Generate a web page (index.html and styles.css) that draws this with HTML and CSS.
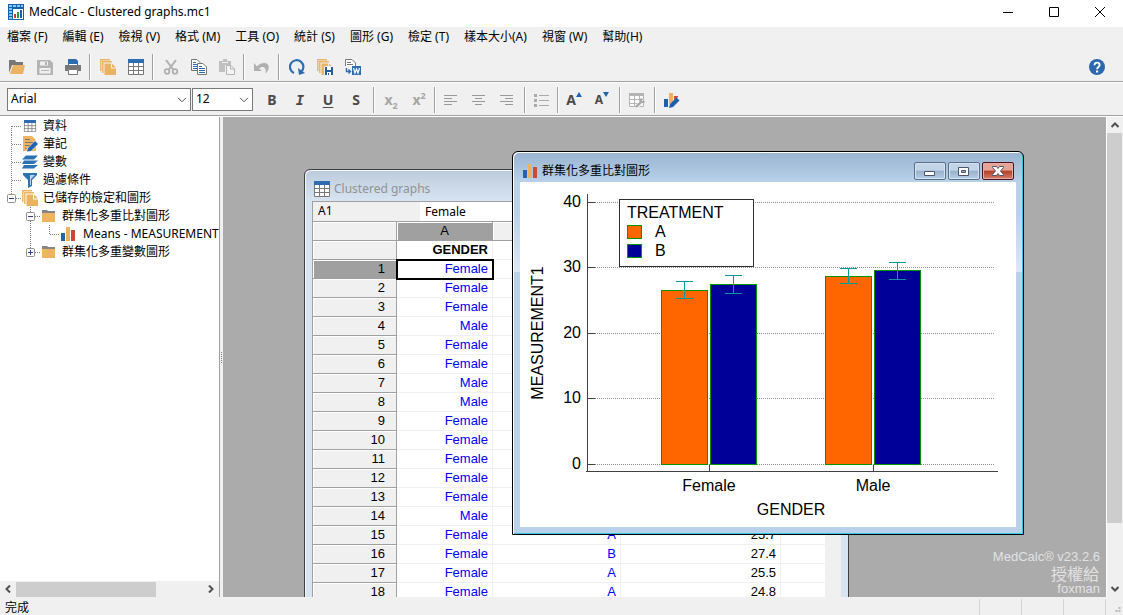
FILE: index.html
```html
<!DOCTYPE html>
<html lang="zh-Hant">

<head>
    <meta charset="UTF-8">
    <meta name="viewport" content="width=device-width, initial-scale=1.0">
    <title>MedCalc - Clustered graphs.mc1</title>
    <link rel="stylesheet" href="styles.css">
</head>

<body>
    <!-- shared icons -->
    <svg class="defs" width="0" height="0">
        <symbol id="i-table" viewBox="0 0 16 16">
            <path fill="#fff" d="M0 0h16v16H0z" />
            <path fill="#2d6cb0" d="M0 0h16v4H0z" />
            <path fill="none" stroke="#777" d="M.5 4v11.500h15V4M0 7.500h16M0 11.500h16M5.500 4v12M10.500 4v12" />
        </symbol>
        <symbol id="i-stack" viewBox="0 0 16 16">
            <path fill="none" stroke="#eab262" stroke-width="1.4" d="M.8 12V.8H10M2.8 14V2.8H12" />
            <path fill="#eab262" d="M4.500 4.500h6.500v5h5V16H4.500z" />
            <path fill="#eab262" d="M12 4.500l4 4h-4z" />
        </symbol>
        <symbol id="i-chart" viewBox="0 0 16 16">
            <path fill="#2463ae" d="M1 7h4v8H1z" />
            <path fill="#eab262" d="M6 1h4v14H6z" />
            <path fill="#cc4a31" d="M11 4h4v11h-4z" />
        </symbol>
        <symbol id="i-folder" viewBox="0 0 16 16">
            <path fill="#858585" d="M1 2h5l1 1h7v3H1z" />
            <path fill="#f0b45e" d="M1 5h13v9H1z" />
        </symbol>
    </svg>

    <header class="titlebar">
        <svg class="app-icon" viewBox="0 0 16 16">
            <path fill="#1264b0" d="M0 0h16v16H0z" />
            <path fill="#8cc4f0" d="M1 1h3v2H1zM5 1h3v2H5zM9 1h3v2H9zM13 1h2v2h-2zM1 4h3v2H1zM1 7h3v2H1zM1 10h3v2H1zM1 13h3v2H1z" />
            <path fill="#fff" d="M5 5h10v10H5z" />
            <path fill="#d33" d="M6 10h2v4H6z" />
            <path fill="#2a9c3a" d="M9 8h2v6H9z" />
            <path fill="#1264b0" d="M12 6h2v8h-2z" />
        </svg>
        <h1>MedCalc - Clustered graphs.mc1</h1>
        <div class="caption">
            <button aria-label="Minimize"><svg viewBox="0 0 12 12"><path d="M1 6.500h10" /></svg></button>
            <button aria-label="Maximize"><svg viewBox="0 0 12 12"><path d="M1.500 1.500h9v9h-9z" /></svg></button>
            <button aria-label="Close"><svg viewBox="0 0 12 12"><path d="M1 1l10 10M11 1L1 11" /></svg></button>
        </div>
    </header>

    <nav class="menubar">
        <button>檔案 (F)</button>
        <button>編輯 (E)</button>
        <button>檢視 (V)</button>
        <button>格式 (M)</button>
        <button>工具 (O)</button>
        <button>統計 (S)</button>
        <button>圖形 (G)</button>
        <button>檢定 (T)</button>
        <button>樣本大小(A)</button>
        <button>視窗 (W)</button>
        <button>幫助(H)</button>
    </nav>

    <div class="toolbar main-tools">
        <button aria-label="Open"><svg viewBox="0 0 16 16">
                <path fill="#777" d="M0 1h6l1 2h7v3H3L0 14z" />
                <path fill="#eab262" d="M4 6h12l-2 9H1z" />
            </svg></button>
        <button aria-label="Save"><svg viewBox="0 0 16 16">
                <path fill="#b4b4b4" fill-rule="evenodd" d="M0 1h13l3 3v12H0zM3 2.500h8v4H3zM2.500 9h11v5.500h-11z" />
                <path fill="#b4b4b4" d="M8 3h2v3H8zM4 11h8v1H4z" />
            </svg></button>
        <button aria-label="Print"><svg viewBox="0 0 16 16">
                <path fill="#777" d="M0 6h16v6h-3v-2H3v2H0z" />
                <path fill="#2d6cb0" d="M3 0h8l2 2v4H3z" />
                <path fill="#fff" d="M4 5h8v1H4zM4 11h8v4H4z" />
                <path fill="none" stroke="#777" d="M3.500 10.500h9v5h-9z" />
            </svg></button>
        <span class="sep"></span>
        <button aria-label="Contents"><svg><use href="#i-stack" /></svg></button>
        <button aria-label="Data"><svg><use href="#i-table" /></svg></button>
        <span class="sep"></span>
        <button aria-label="Cut"><svg viewBox="0 0 16 16">
                <path fill="none" stroke="#b0b0b0" stroke-width="2" d="M3 1l7.500 10M13 1L5.500 11" />
                <circle cx="4" cy="12.500" r="2.300" fill="none" stroke="#b0b0b0" stroke-width="1.800" />
                <circle cx="12" cy="12.500" r="2.300" fill="none" stroke="#b0b0b0" stroke-width="1.800" />
            </svg></button>
        <button aria-label="Copy"><svg viewBox="0 0 16 16">
                <path fill="#fff" stroke="#777" d="M.5.5H6l3 3v8H.5z" />
                <path stroke="#2d6cb0" d="M2 3.500h3M2 5.500h4M2 7.500h4M2 9.500h4" />
                <path fill="#fff" stroke="#777" d="M6.500 4.500H12l3.500 3.500v7.500h-9z" />
                <path stroke="#2d6cb0" d="M8 7.500h3M8 9.500h6M8 11.500h6M8 13.500h6" />
            </svg></button>
        <button aria-label="Paste"><svg viewBox="0 0 16 16">
                <path fill="#c0c0c0" d="M0 2h4V0h4v2h4v4H6v7H0z" />
                <path fill="#f0f0f0" d="M3 3h6v1H3z" />
                <path fill="#f4f4f4" stroke="#b4b4b4" d="M7.500 6.500H12l3.500 3.500v5.500h-8zM11.500 6.500V10h4" />
            </svg></button>
        <span class="sep"></span>
        <button aria-label="Undo"><svg viewBox="0 0 16 16">
                <path fill="#b0b0b0" d="M0 4v8h8L5 9.500c3-3 8-2 6.500 5C16 11 16 4 10.500 4 7.500 4 5 5 3 7.500z" />
            </svg></button>
        <span class="sep"></span>
        <button aria-label="Recalculate"><svg viewBox="0 0 16 16">
                <path fill="none" stroke="#2d6cb0" stroke-width="2.200" d="M5 14A6.700 6.700 0 1 1 12 13" />
                <path fill="#2d6cb0" d="M9 9l1 7 6-2z" />
            </svg></button>
        <button aria-label="Save all"><svg viewBox="0 0 16 16">
                <use href="#i-stack" />
                <path fill="#245d9c" stroke="#f0f0f0" d="M7.500 7.500h9v9h-9z" />
                <path fill="#fff" d="M10 8h4v3h-4zM10 13h4v3h-4z" />
                <path fill="#245d9c" d="M11 14h1v2h-1z" />
            </svg></button>
        <button aria-label="Save to Word"><svg viewBox="0 0 16 16">
                <path fill="#fff" stroke="#777" d="M.5 7V.5H7L10.500 4v3" />
                <path stroke="#777" d="M2 3.500h4M2 5.500h6" />
                <path fill="none" stroke="#2d6cb0" stroke-width="1.400" d="M1.500 9v3.500H5M3.500 10.500l2 2-2 2" />
                <path fill="#2d6cb0" d="M7 7h9v9H7z" />
                <path fill="none" stroke="#fff" stroke-width="1.200" d="M8.500 9l1.500 5 1.500-4 1.500 4 1.500-5" />
            </svg></button>
        <button class="help" aria-label="Help"><svg viewBox="0 0 16 16">
                <circle cx="8" cy="8" r="8" fill="#2b68b0" />
                <path fill="none" stroke="#fff" stroke-width="1.900" d="M5.500 6.200C5.500 2.700 10.600 3 10.600 6c0 2-2.500 1.800-2.500 4.200" />
                <path fill="#fff" d="M7 11.500h2.200v2H7z" />
            </svg></button>
    </div>

    <div class="toolbar format-tools">
        <div class="combo font-name">
            <select aria-label="Font">
                <option>Arial</option>
            </select>
            <svg viewBox="0 0 10 6"><path d="M1 .8l4 4 4-4" /></svg>
        </div>
        <div class="combo font-size">
            <select aria-label="Font size">
                <option>12</option>
            </select>
            <svg viewBox="0 0 10 6"><path d="M1 .8l4 4 4-4" /></svg>
        </div>
        <div class="format-buttons">
            <button><b>B</b></button>
            <button><i>I</i></button>
            <button><u>U</u></button>
            <button><b>S</b></button>
            <span class="sep"></span>
            <button class="off"><b>x<sub>2</sub></b></button>
            <button class="off"><b>x<sup>2</sup></b></button>
            <span class="sep tight"></span>
            <button aria-label="Align left"><svg viewBox="0 0 16 16"><path stroke="#999" d="M1 3.500h13M1 6.500h8M1 9.500h13M1 12.500h8" /></svg></button>
            <button aria-label="Center"><svg viewBox="0 0 16 16"><path stroke="#999" d="M1 3.500h13M4 6.500h7M1 9.500h13M4 12.500h7" /></svg></button>
            <button aria-label="Align right"><svg viewBox="0 0 16 16"><path stroke="#999" d="M1 3.500h13M6 6.500h8M1 9.500h13M6 12.500h8" /></svg></button>
            <span class="sep"></span>
            <button aria-label="List"><svg viewBox="0 0 16 16">
                    <path stroke="#aaa" d="M5 3.500h10M5 8.500h10M5 13.500h10" />
                    <path fill="#aaa" d="M0 2h3v3H0zM0 7h3v3H0zM0 12h3v3H0z" />
                </svg></button>
            <span class="sep tight"></span>
            <button class="grow" aria-label="Larger font"><b>A</b><svg viewBox="0 0 6 5"><path fill="#1f65ad" d="M0 5l3-5 3 5z" /></svg></button>
            <button class="shrink" aria-label="Smaller font"><b>A</b><svg viewBox="0 0 6 5"><path fill="#1f65ad" d="M0 0h6L3 5z" /></svg></button>
            <span class="sep"></span>
            <button aria-label="Format table"><svg viewBox="0 0 16 16">
                    <path fill="#b4b4b4" d="M0 1h15v3H0z" />
                    <path fill="#fafafa" stroke="#b4b4b4" d="M.5 4v10.500h14V4M0 7.500h15M0 11.500h15M5.500 4v10M10.500 4v10" />
                    <path stroke="#f0f0f0" stroke-width="4" d="M7 15l6-5" />
                    <path stroke="#a8a8a8" stroke-width="2.400" d="M7 15l6-6" />
                    <path fill="none" stroke="#a8a8a8" stroke-width="2" d="M12 6.500v3.500h3.500" />
                </svg></button>
            <span class="sep"></span>
            <button aria-label="Format graph"><svg viewBox="0 0 16 16">
                    <path fill="#1f5fa8" d="M0 7h4v8H0z" />
                    <path fill="#eab262" d="M5 1h4v12H5z" />
                    <path fill="#cc4a31" d="M10 4h4v6h-4z" />
                    <path stroke="#f0f0f0" stroke-width="5" d="M6 15l9-8" />
                    <path fill="#1f5fa8" d="M5 16l1-4 6.500-6.500 3 3L9 15z" />
                </svg></button>
        </div>
    </div>

    <main>
        <aside class="sidebar">
            <div class="tree">
                <div class="row">
                    <svg class="guide" viewBox="0 0 19 18"><path d="M9.500 9v9M10 9.500h9" /></svg>
                    <svg class="icon"><use href="#i-table" x="1" y="2" width="14" height="12" /></svg>
                    <span>資料</span>
                </div>
                <div class="row">
                    <svg class="guide" viewBox="0 0 19 18"><path d="M9.500 0v18M10 9.500h9" /></svg>
                    <svg class="icon" viewBox="0 0 16 16">
                        <path fill="#f0b45e" d="M1 0h9l4 4v11H1z" />
                        <path stroke="#777" d="M3 3.500h5M3 6.500h8M3 9.500h5M3 12.500h3" />
                        <path stroke="#fff" stroke-width="5" d="M6 15l9-9" />
                        <path fill="#2463ae" d="M5 15.500l1-3.500 7-7 3 3-7 7z" />
                    </svg>
                    <span>筆記</span>
                </div>
                <div class="row">
                    <svg class="guide" viewBox="0 0 19 18"><path d="M9.500 0v18M10 9.500h9" /></svg>
                    <svg class="icon" viewBox="0 0 16 16">
                        <path fill="#2d72b2" d="M4 1.500h12l-4 4H0zM2 6.500h14l-4 3.500H0zM2 11h14l-4 3.500H0z" />
                    </svg>
                    <span>變數</span>
                </div>
                <div class="row">
                    <svg class="guide" viewBox="0 0 19 18"><path d="M9.500 0v18M10 9.500h9" /></svg>
                    <svg class="icon" viewBox="0 0 16 16">
                        <path fill="#2d72b2" d="M1 1h14v2l-5 5v6l-4 2V8L1 3z" />
                        <path fill="#bcd5ec" d="M8 3h5L9 7v6H8z" />
                    </svg>
                    <span>過濾條件</span>
                </div>
                <div class="row">
                    <svg class="guide" viewBox="0 0 19 18">
                        <path d="M9.500 0v5M14 9.500h5" />
                        <rect x="5.500" y="5.500" width="8" height="8" rx="1" />
                        <path class="sign" d="M7 9.500h5" />
                    </svg>
                    <svg class="icon"><use href="#i-stack" /></svg>
                    <span>已儲存的檢定和圖形</span>
                </div>
                <div class="row">
                    <span class="indent"></span>
                    <svg class="guide" viewBox="0 0 19 18">
                        <path d="M9.500 0v18M14 9.500h5" />
                        <rect x="5.500" y="5.500" width="8" height="8" rx="1" />
                        <path class="sign" d="M7 9.500h5" />
                    </svg>
                    <svg class="icon"><use href="#i-folder" /></svg>
                    <span>群集化多重比對圖形</span>
                </div>
                <div class="row">
                    <span class="indent"></span>
                    <svg class="guide" viewBox="0 0 19 18"><path d="M9.500 0v18" /></svg>
                    <svg class="guide" viewBox="0 0 19 18"><path d="M9.500 0v9M10 9.500h9" /></svg>
                    <svg class="icon"><use href="#i-chart" /></svg>
                    <span class="leaf">Means - MEASUREMENT1</span>
                </div>
                <div class="row">
                    <span class="indent"></span>
                    <svg class="guide" viewBox="0 0 19 18">
                        <path d="M9.500 0v5M14 9.500h5" />
                        <rect x="5.500" y="5.500" width="8" height="8" rx="1" />
                        <path class="sign" d="M7 9.500h5M9.500 7v5" />
                    </svg>
                    <svg class="icon"><use href="#i-folder" /></svg>
                    <span>群集化多重變數圖形</span>
                </div>
            </div>
            <div class="hscroll">
                <svg viewBox="0 0 8 8"><path d="M6 .5L2.500 4 6 7.500" /></svg>
                <div class="track"><div class="thumb"></div></div>
                <svg viewBox="0 0 8 8"><path d="M2 .5L5.500 4 2 7.500" /></svg>
            </div>
        </aside>
        <div class="splitter"><span></span></div>

        <section class="workspace">
            <div class="watermark">
                <p>MedCalc® v23.2.6</p>
                <p class="licence">授權給</p>
                <p>foxman</p>
            </div>

            <div class="window data-window">
                <div class="window-title">
                    <svg class="icon"><use href="#i-table" /></svg>
                    <h2>Clustered graphs</h2>
                </div>
                <div class="sheet">
                    <div class="formula">
                        <label for="cell-value">A1</label>
                        <input id="cell-value" type="text" value="Female">
                    </div>
                    <div class="grid">
                        <table>
                            <colgroup>
                                <col class="c-row">
                                <col class="c-a">
                                <col class="c-b">
                                <col class="c-c">
                                <col class="c-d">
                            </colgroup>
                            <thead>
                                <tr><th></th><th class="active">A</th><th></th><th></th><th></th></tr>
                            </thead>
                            <tbody>
                                <tr class="names"><th></th><td>GENDER</td><td></td><td></td><td></td></tr>
                                <tr><th class="active">1</th><td class="selected">Female</td><td></td><td></td><td></td></tr>
                                <tr><th>2</th><td>Female</td><td></td><td></td><td></td></tr>
                                <tr><th>3</th><td>Female</td><td></td><td></td><td></td></tr>
                                <tr><th>4</th><td>Male</td><td></td><td></td><td></td></tr>
                                <tr><th>5</th><td>Female</td><td></td><td></td><td></td></tr>
                                <tr><th>6</th><td>Female</td><td></td><td></td><td></td></tr>
                                <tr><th>7</th><td>Male</td><td></td><td></td><td></td></tr>
                                <tr><th>8</th><td>Male</td><td></td><td></td><td></td></tr>
                                <tr><th>9</th><td>Female</td><td></td><td></td><td></td></tr>
                                <tr><th>10</th><td>Female</td><td></td><td></td><td></td></tr>
                                <tr><th>11</th><td>Female</td><td></td><td></td><td></td></tr>
                                <tr><th>12</th><td>Female</td><td></td><td></td><td></td></tr>
                                <tr><th>13</th><td>Female</td><td></td><td></td><td></td></tr>
                                <tr><th>14</th><td>Male</td><td></td><td></td><td></td></tr>
                                <tr><th>15</th><td>Female</td><td>A</td><td class="num">25.7</td><td></td></tr>
                                <tr><th>16</th><td>Female</td><td>B</td><td class="num">27.4</td><td></td></tr>
                                <tr><th>17</th><td>Female</td><td>A</td><td class="num">25.5</td><td></td></tr>
                                <tr><th>18</th><td>Female</td><td>A</td><td class="num">24.8</td><td></td></tr>
                            </tbody>
                        </table>
                    </div>
                </div>
            </div>

            <div class="window chart-window">
                <div class="window-title">
                    <svg class="icon"><use href="#i-chart" /></svg>
                    <h2>群集化多重比對圖形</h2>
                    <div class="window-buttons">
                        <button aria-label="Minimize"><svg viewBox="0 0 14 12"><path d="M1.500 6.500h10v4h-10z" /></svg></button>
                        <button aria-label="Maximize"><svg viewBox="0 0 14 12"><path fill-rule="evenodd" d="M1.500 2.500h10v8h-10zM4.500 5.500h4v2h-4z" /></svg></button>
                        <button class="close" aria-label="Close"><svg viewBox="0 0 14 12"><path d="M1.500 1.500h4L7 3.500l1.500-2h4v1L9.500 6l3 3.500v1h-4L7 8.500l-1.500 2h-4v-1l3-3.500-3-3.500z" /></svg></button>
                    </div>
                </div>
                <svg class="chart" viewBox="0 0 496 345">
                    <g class="gridlines">
                        <path d="M75 20.500h400M75 85.500h400M75 151.500h400M75 216.500h400M75 282.500h400" />
                    </g>
                    <g class="axes">
                        <path d="M67.500 12v278M66 289.500h412" />
                        <path d="M68 20.500h7M68 85.500h7M68 151.500h7M68 216.500h7M68 282.500h7M189.500 283v6M353.500 283v6" />
                    </g>
                    <g class="bars">
                        <rect class="a" x="141.500" y="108.500" width="46" height="174" />
                        <rect class="b" x="190.500" y="102.500" width="46" height="180" />
                        <rect class="a" x="305.500" y="94.500" width="46" height="188" />
                        <rect class="b" x="354.500" y="88.500" width="46" height="194" />
                    </g>
                    <g class="errors">
                        <path d="M156 99.500h17M164.500 99v18M156 116.500h17" />
                        <path d="M205 93.500h17M213.500 93v19M205 111.500h17" />
                        <path d="M320 86.500h17M328.500 86v16M320 101.500h17" />
                        <path d="M369 80.500h17M377.500 80v18M369 97.500h17" />
                    </g>
                    <g class="y-labels">
                        <text x="61" y="25">40</text>
                        <text x="61" y="90">30</text>
                        <text x="61" y="156">20</text>
                        <text x="61" y="221">10</text>
                        <text x="61" y="287">0</text>
                    </g>
                    <g class="x-labels">
                        <text x="189" y="309">Female</text>
                        <text x="353" y="309">Male</text>
                        <text x="271" y="333">GENDER</text>
                        <text transform="translate(23 151) rotate(-90)">MEASUREMENT1</text>
                    </g>
                    <!-- legend -->
                    <rect class="legend" x="99.500" y="17.500" width="134" height="67" />
                    <text x="107" y="36">TREATMENT</text>
                    <g class="bars">
                        <rect class="a" x="107.500" y="43.500" width="14" height="13" />
                        <rect class="b" x="107.500" y="62.500" width="14" height="13" />
                    </g>
                    <text x="135" y="55">A</text>
                    <text x="135" y="74">B</text>
                </svg>
            </div>
        </section>

        <div class="vscroll">
            <svg viewBox="0 0 8 8"><path d="M.5 6L4 2.500 7.500 6" /></svg>
            <div class="track"><div class="thumb"></div></div>
            <svg viewBox="0 0 8 8"><path d="M.5 2L4 5.500 7.500 2" /></svg>
        </div>
    </main>

    <footer class="statusbar">
        <span class="message">完成</span>
        <span class="pane"></span>
        <span class="pane"></span>
        <span class="pane"></span>
        <svg class="grip" viewBox="0 0 16 16"><path fill="#b8b8b8" d="M12 8h2v2h-2zM9 11h2v2H9zM12 11h2v2h-2z" /></svg>
    </footer>
</body>

</html>
```

FILE: styles.css
```css
* {
    box-sizing: border-box;
}

body {
    margin: 0;
    height: 100vh;
    display: flex;
    flex-direction: column;
    overflow: hidden;
    background-color: #f0f0f0;
    color: #000;
    font-family: "Noto Sans", "Noto Sans CJK TC", sans-serif;
    font-size: 12px;
    line-height: 18px;
}

h1,
h2 {
    margin: 0;
    font-size: 12px;
    font-weight: normal;
}

button {
    margin: 0;
    padding: 0;
    border: none;
    background: none;
    color: inherit;
    font: inherit;
}

svg {
    display: block;
    flex: none;
}

.defs {
    position: absolute;
}

.icon {
    width: 16px;
    height: 16px;
}

/* title bar */
.titlebar {
    flex: none;
    display: flex;
    align-items: center;
    height: 27px;
    padding-left: 8px;
    padding-bottom: 4px;
    background-color: #fff;
}

.app-icon {
    width: 16px;
    height: 16px;
    margin-right: 5px;
}

.caption {
    display: flex;
    margin-left: auto;
}

.caption button {
    display: flex;
    justify-content: center;
    width: 46px;
}

.caption svg {
    width: 12px;
    height: 12px;
    fill: none;
    stroke: #000;
}

/* menu */
.menubar {
    flex: none;
    display: flex;
    gap: 15px;
    height: 25px;
    padding: 1px 7px 0;
}

.menubar button {
    height: 18px;
    white-space: nowrap;
}

/* toolbars */
.toolbar {
    flex: none;
    display: flex;
    align-items: center;
    border-bottom: 1px solid #a0a0a0;
}

.main-tools {
    height: 30px;
    padding: 0 12px 0 3px;
}

.main-tools .sep {
    margin-left: 2px;
}

.format-tools {
    height: 34px;
    padding: 1px 7px 0;
    border-top: 1px solid #fff;
}

.toolbar button {
    display: flex;
    align-items: center;
    justify-content: center;
    width: 28px;
    height: 24px;
}

.toolbar button svg {
    width: 16px;
    height: 16px;
}

.toolbar .help {
    margin-left: auto;
}

.sep {
    width: 2px;
    height: 26px;
    margin: 0 3px;
    border-left: 1px solid #a0a0a0;
    border-right: 1px solid #fff;
}

.combo {
    position: relative;
    height: 23px;
}

.combo select {
    width: 100%;
    height: 100%;
    padding: 0 3px 1px;
    appearance: none;
    border: 1px solid #7a7a7a;
    border-radius: 0;
    background-color: #fff;
    color: #000;
    font: inherit;
}

.combo svg {
    position: absolute;
    top: 9px;
    right: 4px;
    width: 10px;
    height: 6px;
    fill: none;
    stroke: #555;
    pointer-events: none;
}

.font-name {
    width: 184px;
    margin-right: 1px;
}

.font-size {
    width: 61px;
    margin-right: 5px;
}

.format-buttons {
    display: flex;
    align-items: center;
    color: #4a4a4a;
    font-size: 14px;
}

.format-buttons .sep {
    margin: 0 2px 0 3px;
}

.format-buttons .tight {
    margin: 0 1px;
}

.format-buttons i,
.format-buttons u {
    font-weight: bold;
}

.format-buttons i {
    font-family: "DejaVu Sans Mono", monospace;
}

.format-buttons u {
    text-underline-offset: 2px;
}

.off {
    color: #a5a5a5;
}

.off sub,
.off sup {
    font-size: 9px;
    line-height: 0;
}

.toolbar .grow svg,
.toolbar .shrink svg {
    width: 6px;
    height: 5px;
    margin-bottom: 10px;
}

.shrink b {
    font-size: 12px;
}

/* main area */
main {
    flex: 1;
    display: flex;
    min-height: 0;
    border-top: 1px solid #fff;
}

.sidebar {
    flex: none;
    display: flex;
    flex-direction: column;
    width: 220px;
    border-right: 1px solid #a0a0a0;
    background-color: #fff;
}

.tree {
    flex: 1;
    overflow: hidden;
}

.row {
    display: flex;
    align-items: center;
    height: 18px;
    padding-left: 2px;
    white-space: nowrap;
}

.row .icon {
    margin: 0 5px 0 1px;
}

.row .leaf {
    margin-left: 2px;
}

.guide {
    width: 19px;
    height: 18px;
    fill: none;
    stroke: #808080;
    stroke-dasharray: 1 1;
}

.guide rect {
    fill: #fff;
    stroke: #919191;
    stroke-dasharray: none;
}

.guide .sign {
    stroke: #2b3f8c;
    stroke-dasharray: none;
}

.indent {
    flex: none;
    width: 19px;
}

.hscroll {
    display: flex;
    align-items: center;
    height: 16px;
    background-color: #f0f0f0;
}

.hscroll svg,
.vscroll svg {
    width: 8px;
    height: 8px;
    margin: 4px;
    fill: none;
    stroke: #505050;
    stroke-width: 2;
}

.hscroll .track {
    flex: 1;
    height: 15px;
}

.hscroll .thumb {
    width: 75%;
    height: 100%;
    background-color: #cdcdcd;
}

.splitter {
    flex: none;
    display: flex;
    align-items: center;
    justify-content: center;
    width: 3px;
    background-color: #f0f0f0;
}

.splitter span {
    height: 11px;
    border-left: 1px dotted #808080;
}

.workspace {
    position: relative;
    flex: 1;
    overflow: hidden;
    background-color: #ababab;
}

.vscroll {
    flex: none;
    display: flex;
    flex-direction: column;
    width: 17px;
    border-left: 1px solid #fff;
    background-color: #f0f0f0;
}

.vscroll .track {
    flex: 1;
}

.vscroll .thumb {
    width: 15px;
    height: 87%;
    background-color: #cdcdcd;
}

.watermark {
    position: absolute;
    right: 6px;
    bottom: 0;
    color: #e2e2e2;
    font-family: "Liberation Sans", Arial, sans-serif;
    font-size: 13px;
    line-height: 16px;
    text-align: right;
}

.watermark p {
    margin: 0;
}

.watermark .licence {
    padding-right: 1px;
    font-family: "Noto Sans CJK TC", sans-serif;
    font-size: 16px;
}

/* child windows */
.window {
    position: absolute;
    padding: 0 6px 6px;
    border: 1px solid #404040;
    border-radius: 6px 6px 0 0;
}

.window-title {
    display: flex;
    align-items: center;
}

.window-title .icon {
    margin-right: 4px;
}

.data-window {
    left: 81px;
    top: 52px;
    width: 545px;
    background: linear-gradient(#bccbdc, #d7e4f2 31px);
    box-shadow: inset 1px 1px #f2f6fb;
}

.data-window .window-title {
    height: 31px;
    padding: 6px 3px 0;
    color: #929292;
}

.sheet {
    margin: 0 1px;
    border: 1px solid #a0a0a0;
    border-right: none;
    background-color: #f0f0f0;
}

.formula {
    display: flex;
    height: 20px;
    border-bottom: 1px solid #a0a0a0;
}

.formula label {
    width: 107px;
    padding-left: 5px;
}

.formula input {
    flex: 1;
    min-width: 0;
    padding: 0 5px;
    border: none;
    color: #000;
    font: inherit;
}

.grid table {
    width: 513px;
    table-layout: fixed;
    border-collapse: separate;
    border-spacing: 0;
    background-color: #fff;
    font-family: "Liberation Sans", Arial, sans-serif;
    font-size: 13px;
    line-height: 18px;
}

.c-row {
    width: 84px;
}

.c-a {
    width: 96px;
}

.c-b {
    width: 128px;
}

.c-c {
    width: 160px;
}

.grid tr {
    height: 19px;
}

.grid th,
.grid td {
    padding: 0 4px;
    border-right: 1px solid #f0f0f0;
    border-bottom: 1px solid #f0f0f0;
    text-align: right;
}

.grid td {
    color: #0000ff;
}

.grid th {
    padding-right: 11px;
    border-right-color: #a0a0a0;
    border-bottom-color: #a0a0a0;
    background-color: #f0f0f0;
    box-shadow: inset 1px 1px #fff;
    font-weight: normal;
}

.grid thead th {
    padding: 0 4px;
    text-align: center;
}

.grid .active {
    background-color: #a0a0a0;
}

.grid .names td {
    color: #000;
    font-weight: bold;
}

.grid .num {
    color: #000;
}

.grid .selected {
    outline: 2px solid #000;
    outline-offset: -1px;
}

.chart-window {
    left: 289px;
    top: 34px;
    width: 512px;
    border-color: #000;
    padding: 0 7px 7px;
    background: linear-gradient(#99b4d1, #b9d1ea 30px, #b9d1ea 60px, #dce8f6 120px, #b9d1ea 120px);
    box-shadow: inset 1px 1px #fff, inset -1px -1px #35c8e6;
}

.chart-window .window-title {
    height: 30px;
    padding: 7px 2px 0;
}

.window-buttons {
    display: flex;
    gap: 2px;
    margin-left: auto;
}

.window-buttons button {
    display: flex;
    align-items: center;
    justify-content: center;
    width: 32px;
    height: 18px;
    border: 1px solid #5c6f88;
    border-radius: 2px;
    background: linear-gradient(#c3d4e7 45%, #98b1cc 50%, #b6cde6);
    box-shadow: inset 0 0 0 1px #d5e2f0;
}

.window-buttons svg {
    width: 14px;
    height: 12px;
    fill: #fff;
    stroke: #4d5566;
}

.window-buttons .close {
    border-color: #4a1420;
    background: linear-gradient(#e6a398 45%, #b53d26 50%, #d4806d);
    box-shadow: inset 0 0 0 1px #e8aaa0;
}

.chart {
    width: 100%;
    background-color: #fff;
    font-family: "Liberation Sans", Arial, sans-serif;
    font-size: 16px;
}

.chart path {
    fill: none;
}

.gridlines {
    stroke: #8c8c8c;
    stroke-dasharray: 1 1;
}

.axes {
    stroke: #404040;
}

.bars rect {
    stroke: #009600;
}

.bars .a {
    fill: #ff6600;
}

.bars .b {
    fill: #000099;
}

.errors {
    stroke: #009999;
}

.y-labels {
    text-anchor: end;
}

.x-labels {
    text-anchor: middle;
}

.legend {
    fill: #fff;
    stroke: #303030;
}

/* status bar */
.statusbar {
    flex: none;
    display: flex;
    height: 18px;
    padding-top: 2px;
}

.message {
    flex: 1;
    padding-left: 5px;
}

.pane {
    width: 42px;
    border-left: 1px solid #d4d4d4;
}

.grip {
    width: 18px;
    height: 16px;
    border-left: 1px solid #d4d4d4;
}
```
